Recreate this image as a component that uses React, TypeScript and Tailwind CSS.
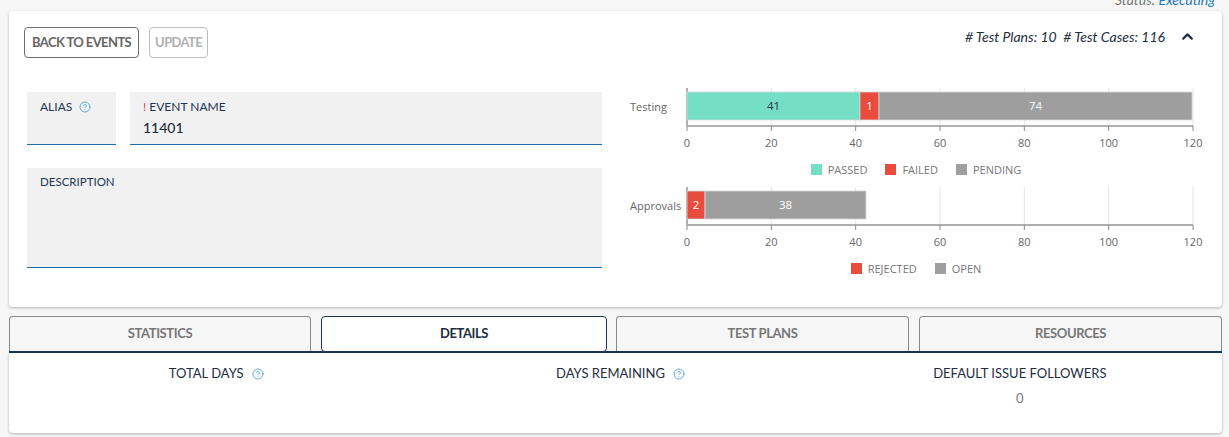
import React from "react";
import { ChevronUp, CircleHelp } from "lucide-react";

const ui = { fontFamily: "Lato, 'Noto Sans', sans-serif" };
const chartFont = "'Open Sans', 'Noto Sans', sans-serif";

const X0 = 67;
const X1 = 573;
const ticks = [0, 20, 40, 60, 80, 100, 120];

type Seg = { x: number; w: number; fill: string; label: string; color: string };

function BarChart({ name, segs }: { name: string; segs: Seg[] }) {
  const step = (X1 - X0) / 6;
  return (
    <svg width={587} height={72} style={{ fontFamily: chartFont, display: "block", overflow: "visible" }}>
      {ticks.map((t, i) => (
        <line key={"g" + t} x1={X0 + i * step} x2={X0 + i * step} y1={3} y2={41} stroke="#dfe6e6" strokeWidth={1} />
      ))}
      <line x1={X0} x2={X0} y1={3} y2={41} stroke="#9a9a9a" strokeWidth={1.5} />
      {segs.map((s) => (
        <g key={s.label}>
          <rect x={s.x} y={7} width={s.w} height={28} fill={s.fill} stroke="#d6d6d6" strokeWidth={0.8} />
          <text x={s.x + s.w / 2} y={25} textAnchor="middle" fontSize={11.5} fill={s.color}>
            {s.label}
          </text>
        </g>
      ))}
      <line x1={X0} x2={X1} y1={41} y2={41} stroke="#b0b0b0" strokeWidth={2} />
      {ticks.map((t, i) => (
        <g key={"t" + t}>
          <line x1={X0 + i * step} x2={X0 + i * step} y1={41} y2={46} stroke="#8a8a8a" strokeWidth={1} />
          <text x={X0 + i * step} y={62} textAnchor="middle" fontSize={11} fill="#666">
            {t}
          </text>
        </g>
      ))}
      <text x={10} y={26} fontSize={11} fill="#666">
        {name}
      </text>
    </svg>
  );
}

function Legend({ items }: { items: { c: string; t: string }[] }) {
  return (
    <div className="ml-[5px] flex h-[14px] items-center justify-center gap-[18px]" style={{ fontFamily: chartFont }}>
      {items.map((it) => (
        <div key={it.t} className="flex items-center gap-[6px]">
          <span className="block h-[11px] w-[11px]" style={{ backgroundColor: it.c }} />
          <span className="text-[11px] leading-none text-[#777]">{it.t}</span>
        </div>
      ))}
    </div>
  );
}

function Help() {
  return <CircleHelp size={12} strokeWidth={1.6} color="#3a9ad9" className="inline-block" />;
}

export default function App() {
  return (
    <div className="min-h-[437px] w-[1229px] overflow-hidden bg-[#f6f6f6]" style={ui}>
      <div className="-mt-[9px] flex h-[20px] justify-end pr-[14px] text-[14px] italic leading-[17px]">
        <span className="text-[#777]">Status:&nbsp;</span>
        <span className="text-[#1b78b8]">Executing</span>
      </div>

      <div className="ml-[9px] mr-[7px] rounded-[4px] bg-white px-[15px] pb-[39px] pt-[16px] shadow-[0_1px_3px_rgba(0,0,0,0.28)]">
        <div className="flex h-[31px] items-start">
          <button className="h-[31px] rounded-[4px] border border-[#6e6e6e] px-[7px] text-[13px] font-bold tracking-[-0.6px] text-[#666]">
            BACK TO EVENTS
          </button>
          <button className="ml-[10px] h-[31px] rounded-[4px] border border-[#bdbdbd] px-[5px] text-[13px] font-bold tracking-[-0.6px] text-[#b0b0b0]">
            UPDATE
          </button>
          <div className="ml-auto mr-[11px] mt-[-1px] flex items-center text-[14px] italic text-[#1e2d40]">
            <span># Test Plans: 10&nbsp;&nbsp;# Test Cases: 116</span>
            <ChevronUp size={17} strokeWidth={3} color="#1e2d40" className="ml-[14px]" />
          </div>
        </div>

        <div className="mt-[34px] flex h-[176px] items-start">
          <div className="ml-[3px] w-[575px] shrink-0">
            <div className="flex gap-[14px]">
              <div className="h-[53px] w-[89px] border-b-[1.5px] border-[#1b6fa8] bg-[#f1f1f1] pl-[13px] pt-[6px]">
                <div className="flex items-center gap-[7px] text-[12px] text-[#1e3550]">
                  ALIAS <Help />
                </div>
              </div>
              <div className="h-[53px] flex-1 border-b-[1.5px] border-[#1b6fa8] bg-[#f1f1f1] pl-[13px] pt-[6px]">
                <div className="text-[12px] text-[#1e3550]">
                  <span className="text-[#e53935]">!</span> EVENT NAME
                </div>
                <div className="mt-[1px] text-[14px] font-medium text-[#1e2d40]">11401</div>
              </div>
            </div>
            <div className="mt-[23px] h-[100px] border-b-[1.5px] border-[#1b6fa8] bg-[#f1f1f1] pl-[13px] pt-[5px]">
              <div className="text-[11.5px] text-[#1e3550]">DESCRIPTION</div>
            </div>
          </div>

          <div className="-mt-[7px] ml-[18px] w-[587px] shrink-0">
            <BarChart
              name="Testing"
              segs={[
                { x: 67, w: 173, fill: "#74dfc4", label: "41", color: "#2b3440" },
                { x: 240, w: 19, fill: "#e74c3c", label: "1", color: "#fff" },
                { x: 259, w: 313, fill: "#9e9e9e", label: "74", color: "#fff" },
              ]}
            />
            <div className="mt-[5px]">
              <Legend
                items={[
                  { c: "#74dfc4", t: "PASSED" },
                  { c: "#e74c3c", t: "FAILED" },
                  { c: "#9e9e9e", t: "PENDING" },
                ]}
              />
            </div>
            <div className="mt-[8px]">
              <BarChart
                name="Approvals"
                segs={[
                  { x: 67, w: 18, fill: "#e74c3c", label: "2", color: "#fff" },
                  { x: 85, w: 161, fill: "#9e9e9e", label: "38", color: "#fff" },
                ]}
              />
            </div>
            <div className="mt-[5px]">
              <Legend
                items={[
                  { c: "#e74c3c", t: "REJECTED" },
                  { c: "#9e9e9e", t: "OPEN" },
                ]}
              />
            </div>
          </div>
        </div>
      </div>

      <div className="ml-[9px] mr-[7px] mt-[10px]">
        <div className="flex h-[36px] items-end border-b-2 border-[#1c3550]">
          <div className="flex h-[35px] w-[302px] items-center justify-center rounded-t-[4px] border border-b-0 border-[#8a8a8a] bg-[#f6f6f6] text-[13px] font-bold tracking-[-0.4px] text-[#777]">
            STATISTICS
          </div>
          <div className="mb-[-1px] ml-[10px] flex h-[36px] w-[286px] items-center justify-center rounded-[4px] border border-[#1c3550] bg-white text-[13px] font-bold tracking-[-0.4px] text-[#1e2d40]">
            DETAILS
          </div>
          <div className="ml-[9px] flex h-[35px] w-[293px] items-center justify-center rounded-t-[4px] border border-b-0 border-[#8a8a8a] bg-[#f6f6f6] text-[13px] font-bold tracking-[-0.4px] text-[#777]">
            TEST PLANS
          </div>
          <div className="ml-[10px] flex h-[35px] w-[303px] items-center justify-center rounded-t-[4px] border border-b-0 border-[#8a8a8a] bg-[#f6f6f6] text-[13px] font-bold tracking-[-0.4px] text-[#777]">
            RESOURCES
          </div>
        </div>
        <div className="grid h-[80px] grid-cols-3 rounded-b-[4px] bg-white shadow-[0_1px_3px_rgba(0,0,0,0.28)]">
          <div className="flex items-start justify-center pl-[10px] pt-[11px]">
            <div className="flex items-center gap-[8px] text-[13px] text-[#1e2d40]">
              TOTAL DAYS <Help />
            </div>
          </div>
          <div className="flex items-start justify-center pl-[10px] pt-[11px]">
            <div className="flex items-center gap-[8px] text-[13px] text-[#1e2d40]">
              DAYS REMAINING <Help />
            </div>
          </div>
          <div className="flex flex-col items-center pt-[11px]">
            <div className="text-[13px] text-[#1e2d40]">DEFAULT ISSUE FOLLOWERS</div>
            <div className="mt-[5px] text-[13px] text-[#777]">0</div>
          </div>
        </div>
      </div>
    </div>
  );
}
